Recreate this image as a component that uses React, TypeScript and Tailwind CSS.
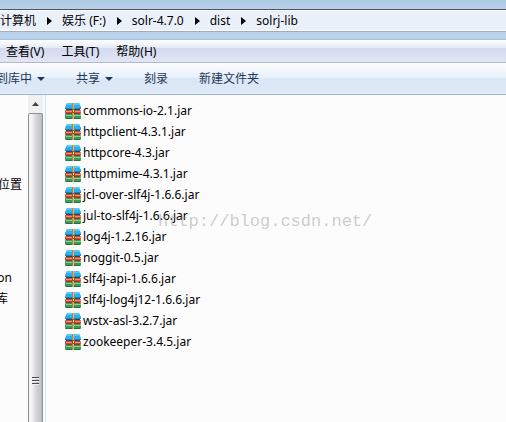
const files = [
  'commons-io-2.1.jar',
  'httpclient-4.3.1.jar',
  'httpcore-4.3.jar',
  'httpmime-4.3.1.jar',
  'jcl-over-slf4j-1.6.6.jar',
  'jul-to-slf4j-1.6.6.jar',
  'log4j-1.2.16.jar',
  'noggit-0.5.jar',
  'slf4j-api-1.6.6.jar',
  'slf4j-log4j12-1.6.6.jar',
  'wstx-asl-3.2.7.jar',
  'zookeeper-3.4.5.jar',
];

const crumbs = ['计算机', '娱乐 (F:)', 'solr-4.7.0', 'dist', 'solrj-lib'];
const menus = ['查看(V)', '工具(T)', '帮助(H)'];
const tools = [
  { label: '到库中', menu: true },
  { label: '共享', menu: true },
  { label: '刻录', menu: false },
  { label: '新建文件夹', menu: false },
];

function ArchiveIcon() {
  return (
    <svg className="h-4 w-4 shrink-0" viewBox="0 0 16 16" aria-hidden="true">
      <path d="M2 0h12l2 4v2H0V4z" fill="#2db0ea" />
      <path d="M2 0h12l1 2H1z" fill="#55c8f5" />
      <rect y="5" width="16" height="1" fill="#1583c4" />
      <rect x="1" y="6" width="14" height="1" fill="#2a4658" />
      <rect y="7" width="16" height="4" rx="1" fill="#c94a30" />
      <rect x="1" y="8" width="15" height="1" fill="#ec9274" />
      <rect x="1" y="10" width="14" height="1" fill="#96382a" />
      <rect y="11" width="16" height="5" rx="1" fill="#3b9a58" />
      <rect x="1" y="12" width="15" height="1" fill="#8fcf90" />
      <rect x="1" y="15" width="14" height="1" fill="#2a7040" />
      <rect x="7" width="2" height="16" fill="#b5843f" />
      <rect x="8" width="1" height="16" fill="#d9b778" />
      <rect x="7" y="6" width="3" height="4" fill="#8a5a28" />
      <rect x="8" y="7" width="1" height="2" fill="#ecd6a0" />
    </svg>
  );
}

function CrumbArrow() {
  return (
    <svg className="h-2 w-[5px] shrink-0" viewBox="0 0 5 8" aria-hidden="true">
      <path d="M0 0L5 4L0 8z" fill="#000" />
    </svg>
  );
}

export default function App() {
  return (
    <div className="flex h-screen flex-col overflow-hidden whitespace-nowrap bg-[#fcfcfc] font-['Noto_Sans','Noto_Sans_CJK_SC',sans-serif] text-[12px] leading-[21px] text-black">
      <header className="shrink-0">
        <div className="h-[9px] bg-linear-to-b from-[#adc8e2] to-[#b9d1ea]" />
        <nav aria-label="地址" className="flex h-[23px] items-center gap-[11px] border-y border-t-[#4b5563] border-b-[#a3abb4] bg-[#eaf1fa] shadow-[inset_0_1px_0_#fff,inset_0_-1px_0_#fff]">
          {crumbs.map((crumb, i) => (
            <div key={crumb} className="flex items-center gap-[10px]">
              {i > 0 && <CrumbArrow />}
              <button type="button">{crumb}</button>
            </div>
          ))}
        </nav>
        <div className="h-2 border-b border-[#a5bfd9] bg-[#b9d1ea]" />
        <div className="flex h-[23px] items-center gap-[17px] border-b border-[#b0b9cf] bg-[linear-gradient(#fff_0%,#e5eaf5_35%,#d4daed_36%,#e2e5f4_100%)] px-[6px]">
          {menus.map((menu) => (
            <button key={menu} type="button">{menu}</button>
          ))}
        </div>
        <div className="flex h-8 items-center gap-[31px] border-b border-[#9fb2cc] bg-[linear-gradient(#fdfeff_0%,#e6f0fa_48%,#dce7f5_49%,#dde9f7_100%)] text-[#1e395b] shadow-[inset_0_-1px_0_#e8f1fb]">
          {tools.map((tool) => (
            <button key={tool.label} type="button" className="flex items-center gap-[5px] first:-ml-1">
              {tool.label}
              {tool.menu && (
                <svg className="h-1 w-2" viewBox="0 0 8 4" aria-hidden="true">
                  <path d="M0 0h8L4 4z" fill="#1e395b" />
                </svg>
              )}
            </button>
          ))}
        </div>
      </header>

      <div className="flex min-h-0 flex-1">
        <aside className="flex w-7 shrink-0 flex-col items-start pt-[79px]">
          <span className="flex w-[22px] justify-end">位置</span>
          <span className="mt-[72px] flex w-3 justify-end">on</span>
          <span className="flex w-2 justify-end">库</span>
        </aside>
        <div className="flex w-[15px] shrink-0 flex-col bg-[#f0f0f0]">
          <button type="button" aria-label="向上滚动" className="flex h-[18px] shrink-0 items-center justify-center">
            <svg className="h-1 w-[7px]" viewBox="0 0 7 4" aria-hidden="true">
              <path d="M3.500 0L7 4H0z" fill="#444" />
            </svg>
          </button>
          <div className="flex flex-1 flex-col items-center justify-end rounded-t-xs border border-b-0 border-[#909090] bg-linear-to-r from-[#f5f5f5] from-20% via-[#d9d9dc] via-50% to-[#bcbcc0] pb-[37px]">
            <svg className="h-2 w-[7px]" viewBox="0 0 7 8" aria-hidden="true" shapeRendering="crispEdges">
              <path d="M0 0h7v1H0zM0 3h7v1H0zM0 6h7v1H0z" fill="#4c4c4c" />
              <path d="M0 1h7v1H0zM0 4h7v1H0zM0 7h7v1H0z" fill="#f0f0f0" />
            </svg>
          </div>
        </div>
        <main className="relative ml-[2px] min-w-0 flex-1 border-l border-[#d6e2f0] pl-[19px] pt-[5px]">
          <ul>
            {files.map((file) => (
              <li key={file} className="flex h-[21px] items-center gap-[2px]">
                <ArchiveIcon />
                <span>{file}</span>
              </li>
            ))}
          </ul>
          <p className="pointer-events-none absolute left-28 top-[116px] font-['Liberation_Mono',monospace] text-[17px] text-[#8f8f88]/45">
            http://blog.csdn.net/
          </p>
        </main>
      </div>
    </div>
  );
}
